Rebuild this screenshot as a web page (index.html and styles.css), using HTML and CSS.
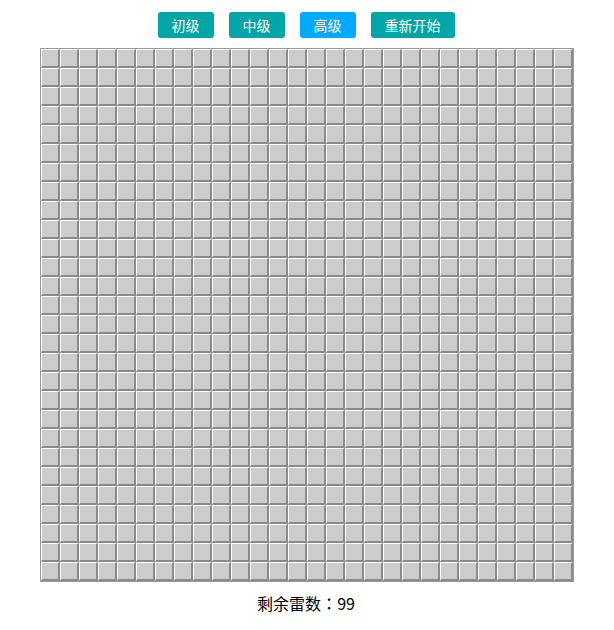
FILE: index.html
```html
<!DOCTYPE html>
<html lang="zh">
<head>
<meta charset="utf-8">
<title>扫雷</title>
<link rel="stylesheet" href="styles.css">
</head>
<body>
<div class="toolbar">
  <button class="btn">初级</button>
  <button class="btn">中级</button>
  <button class="btn active">高级</button>
  <button class="btn">重新开始</button>
</div>
<div class="board" id="board"></div>
<div class="status">剩余雷数<span class="colon" lang="zh-TW">：</span>99</div>
<script src="script.js"></script>
</body>
</html>
```
FILE: styles.css
```css
html, body {
  margin: 0;
  padding: 0;
  background: #fff;
  font-family: "Noto Sans CJK SC", "Noto Sans", sans-serif;
}
.toolbar {
  display: flex;
  justify-content: center;
  gap: 15px;
  padding-top: 12px;
  padding-right: 2px;
}
.btn {
  height: 26px;
  padding: 0 14px;
  border: 0;
  border-radius: 3px;
  background: #00a6a6;
  color: #fff;
  font-family: "Noto Sans CJK SC", sans-serif;
  font-size: 14px;
  line-height: 26px;
  cursor: pointer;
}
.btn.active {
  background: #00aaff;
}
.board {
  width: 532px;
  margin: 10px auto 0;
  border: 1px solid #999;
  display: grid;
  grid-template-columns: repeat(28, 19px);
  grid-auto-rows: 19px;
}
.cell {
  box-sizing: border-box;
  background: #cccccc;
  border-top: 1px solid #fff;
  border-left: 1px solid #fff;
  border-right: 2px solid #8a8a8a;
  border-bottom: 2px solid #8a8a8a;
}
.status {
  text-align: center;
  font-size: 16px;
  line-height: 22px;
  margin-top: 10px;
  padding-right: 2px;
  color: #000;
}
.colon {
  font-family: "Noto Sans CJK TC", sans-serif;
}
```
FILE: script.js
```js
var board = document.getElementById('board');
for (var i = 0; i < 28 * 28; i++) {
  var c = document.createElement('div');
  c.className = 'cell';
  board.appendChild(c);
}
```
